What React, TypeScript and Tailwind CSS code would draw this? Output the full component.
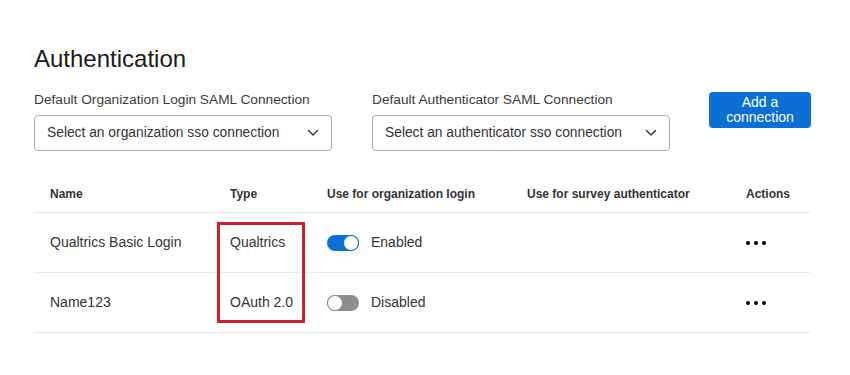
import React from "react";

interface Row {
  name: string;
  type: string;
  enabled: boolean;
}

const rows: Row[] = [
  { name: "Qualtrics Basic Login", type: "Qualtrics", enabled: true },
  { name: "Name123", type: "OAuth 2.0", enabled: false },
];

function Chevron() {
  return (
    <svg width="12" height="8" viewBox="0 0 12 8" fill="none">
      <path d="M1.5 1.5 6 6l4.5-4.5" stroke="#333" strokeWidth="1.4" strokeLinecap="round" strokeLinejoin="round" />
    </svg>
  );
}

function SelectBox({ label, placeholder }: { label: string; placeholder: string }) {
  return (
    <div className="flex flex-col w-[298px]">
      <label className="text-[13.7px] leading-[20px] text-[#3b3b3b] mb-[5px]">{label}</label>
      <div className="h-[36px] border border-[#aaaaaa] rounded-[4px] flex items-center justify-between pl-[12px] pr-[12px] bg-white">
        <span className="text-[13.8px] text-[#333]">{placeholder}</span>
        <Chevron />
      </div>
    </div>
  );
}

function Toggle({ on }: { on: boolean }) {
  return on ? (
    <div className="w-[32px] h-[16px] rounded-full bg-[#0b6fd6] flex items-center justify-end">
      <div className="w-[16px] h-[16px] rounded-full bg-white border-[1.5px] border-[#0b6fd6]" />
    </div>
  ) : (
    <div className="w-[32px] h-[16px] rounded-full bg-[#8c8c8c] flex items-center justify-start">
      <div className="w-[16px] h-[16px] rounded-full bg-white border-[1.5px] border-[#8c8c8c]" />
    </div>
  );
}

function Dots() {
  return (
    <div className="flex gap-[4px]">
      <span className="w-[4px] h-[4px] rounded-full bg-black" />
      <span className="w-[4px] h-[4px] rounded-full bg-black" />
      <span className="w-[4px] h-[4px] rounded-full bg-black" />
    </div>
  );
}

export default function App() {
  return (
    <div
      className="w-[850px] h-[375px] bg-white text-[#333] pl-[34px] pt-[44px]"
      style={{ fontFamily: '"Liberation Sans", Arial, sans-serif' }}
    >
      <h1 className="text-[24px] leading-[30px] text-[#1a1a1a]">Authentication</h1>

      <div className="flex mt-[16px] w-[777px]">
        <SelectBox label="Default Organization Login SAML Connection" placeholder="Select an organization sso connection" />
        <div className="ml-[40px]">
          <SelectBox label="Default Authenticator SAML Connection" placeholder="Select an authenticator sso connection" />
        </div>
        <button className="ml-[39px] mt-[2px] w-[102px] h-[36px] rounded-[4px] bg-[#0b6fd6] text-white text-[14px] leading-[15px]">
          Add a
          <br />
          connection
        </button>
      </div>

      <div className="mt-[32px] w-[776px] relative">
        <div className="grid grid-cols-[180px_97px_200px_219px_80px] h-[30px] pt-[2px] items-start border-b border-[#ececec] text-[12px] font-bold text-[#333]">
          <div className="pl-[16px]">Name</div>
          <div className="pl-[16px]">Type</div>
          <div className="pl-[16px]">Use for organization login</div>
          <div className="pl-[16px]">Use for survey authenticator</div>
          <div className="pl-[16px]">Actions</div>
        </div>
        {rows.map((r) => (
          <div
            key={r.name}
            className="grid grid-cols-[180px_97px_200px_219px_80px] h-[60px] items-center border-b border-[#ececec] text-[14px] text-[#333]"
          >
            <div className="pl-[16px]">{r.name}</div>
            <div className="pl-[16px]">{r.type}</div>
            <div className="pl-[16px] flex items-center gap-[12px]">
              <Toggle on={r.enabled} />
              <span>{r.enabled ? "Enabled" : "Disabled"}</span>
            </div>
            <div />
            <div className="pl-[16px]">
              <Dots />
            </div>
          </div>
        ))}
        <div className="absolute left-[183px] top-[39px] w-[88px] h-[101px] border-[3px] border-[#c8202f]" />
      </div>
    </div>
  );
}
